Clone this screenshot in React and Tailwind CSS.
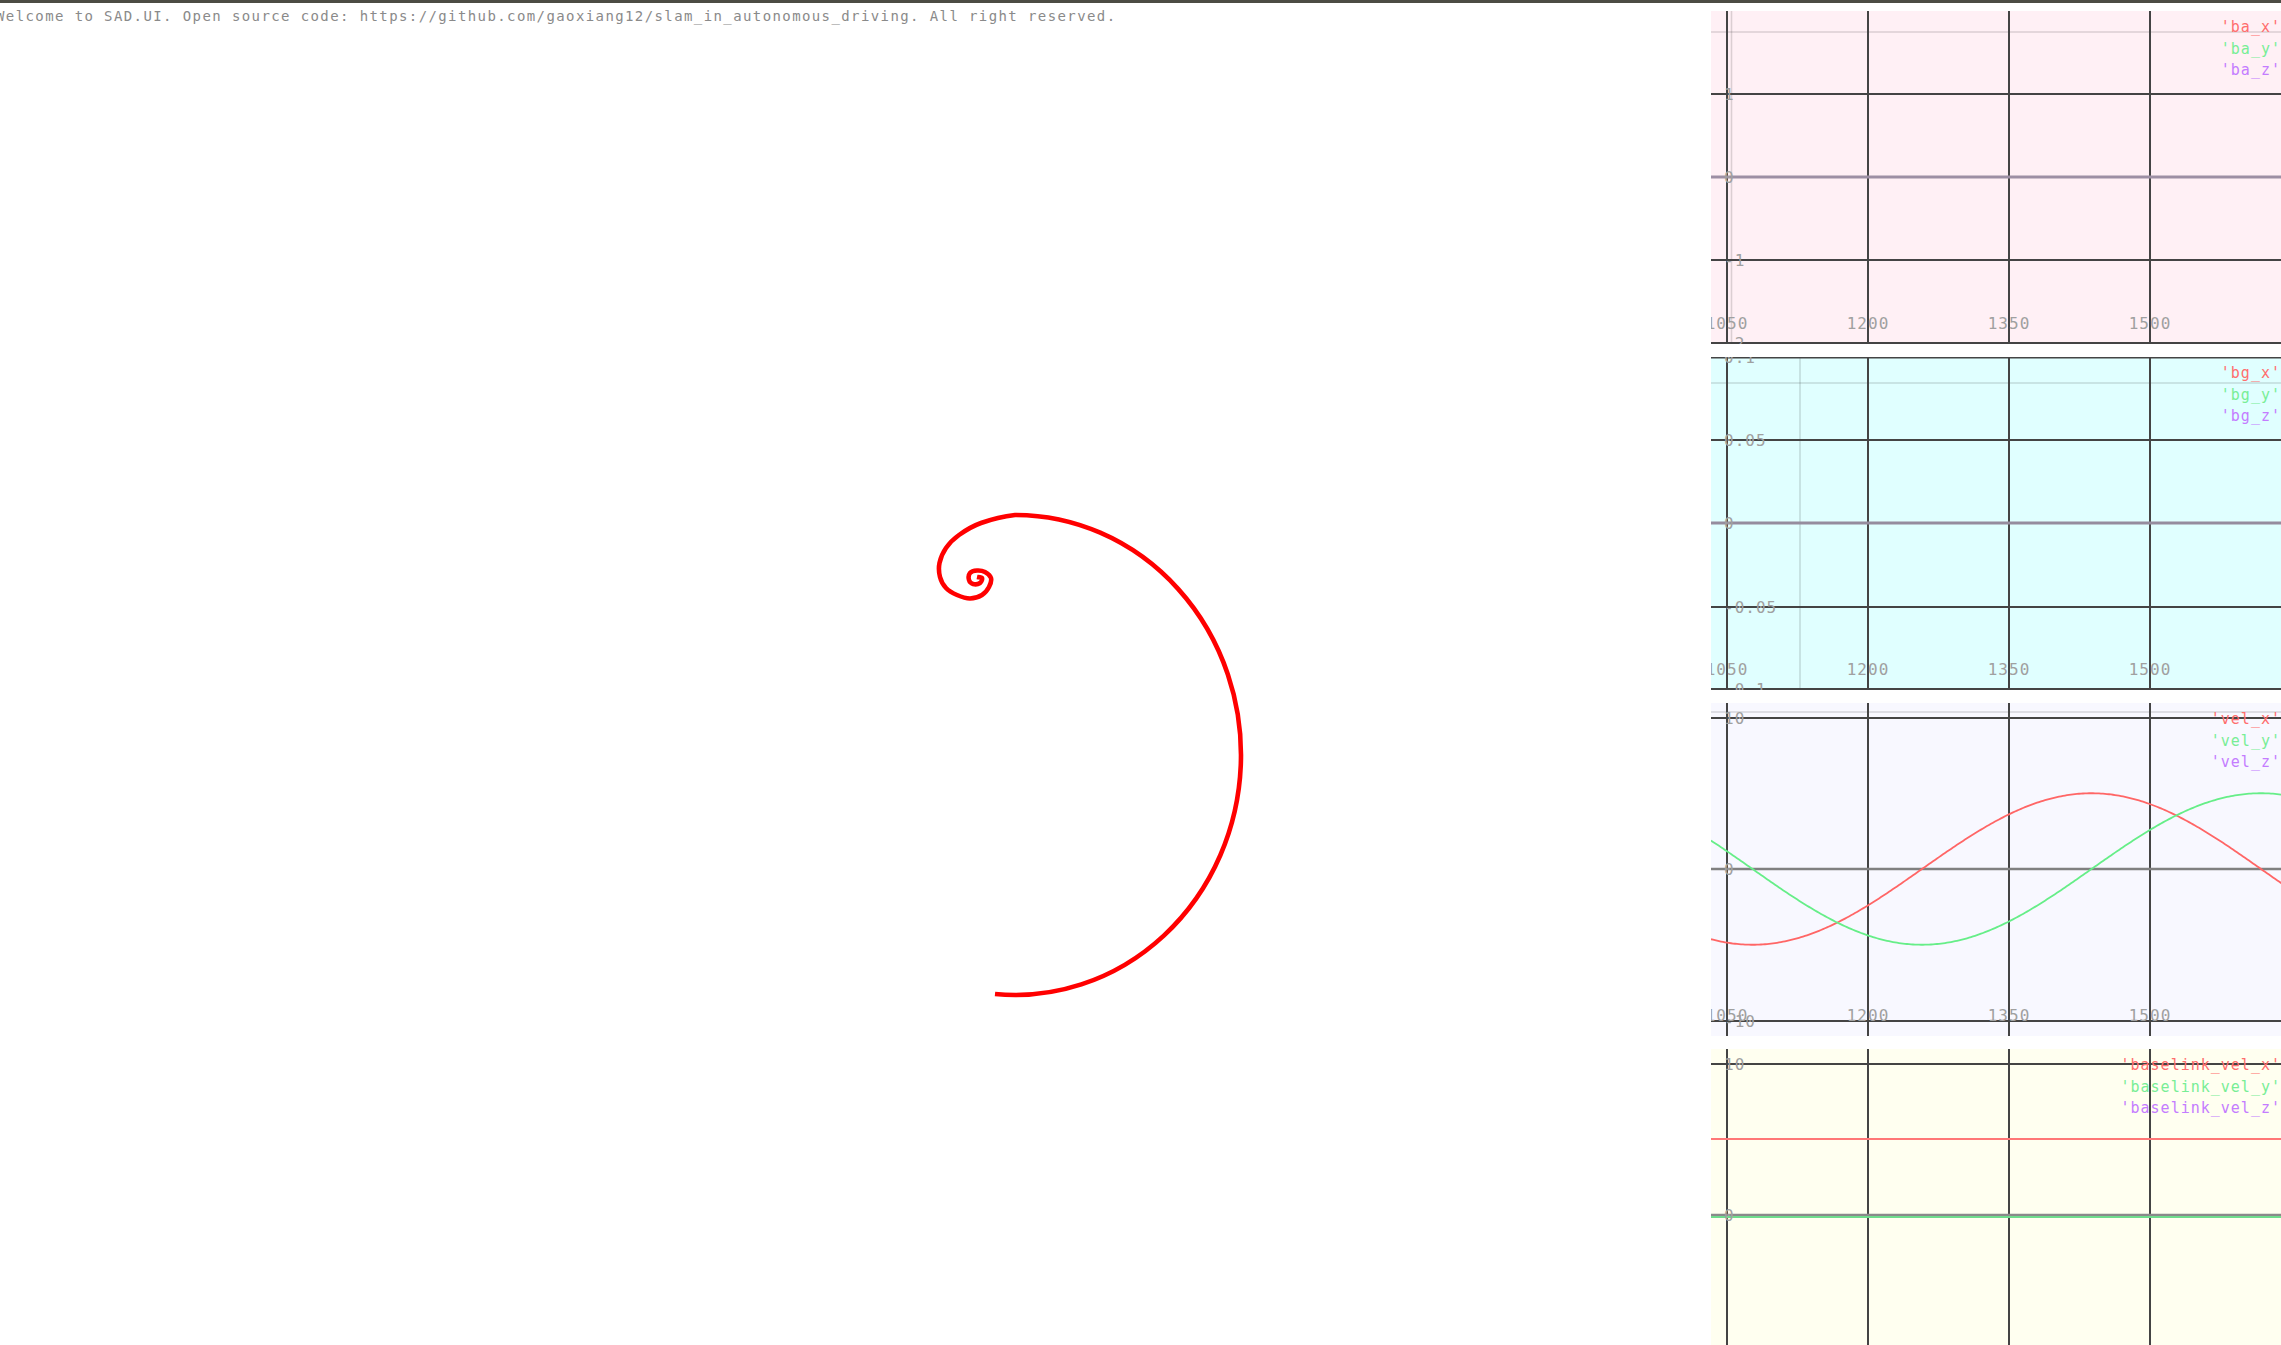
import React from "react";

const MONO = '"DejaVu Sans Mono", "Liberation Mono", monospace';

// inner curl, in travel order (from the start of the trajectory outwards)
const CURL = [
  [977, 577], [982, 578], [980, 583], [973, 584], [969, 580], [970, 573],
  [977, 570.5], [985, 572], [991, 578], [989, 587], [982, 595], [970, 598.5],
  [957, 595], [946, 588], [940, 577], [939.5, 563], [946, 548], [959, 535],
  [981, 523], [1015, 515],
];
const TANGENT_TAIL = [1045, 515.6];

function curlPath(pts, tail) {
  const all = [...pts, tail];
  let d = `M${pts[0][0]} ${pts[0][1]}`;
  for (let i = 0; i < pts.length - 1; i++) {
    const p0 = all[Math.max(0, i - 1)];
    const p1 = all[i];
    const p2 = all[i + 1];
    const p3 = all[i + 2];
    const c1x = p1[0] + (p2[0] - p0[0]) / 6;
    const c1y = p1[1] + (p2[1] - p0[1]) / 6;
    const c2x = p2[0] - (p3[0] - p1[0]) / 6;
    const c2y = p2[1] - (p3[1] - p1[1]) / 6;
    d += ` C${c1x.toFixed(2)} ${c1y.toFixed(2)} ${c2x.toFixed(2)} ${c2y.toFixed(2)} ${p2[0]} ${p2[1]}`;
  }
  return d;
}

// big outer arc: ellipse centre (1015, 755), radii 226 x 240, ending near the bottom
const SPIRAL_D = curlPath(CURL, TANGENT_TAIL) + " A226 240 0 1 1 995 994.06";

function wave(fn) {
  let d = "";
  for (let x = 0; x <= 572; x += 2) {
    const X = x + 1711;
    const th = (2 * Math.PI * (X - 1922)) / 678;
    const y = 166 - fn(th) * 15.15;
    d += (x ? " L" : "M") + x + " " + y.toFixed(2);
  }
  return d;
}

const RED_WAVE = wave((t) => 5 * Math.sin(t));
const GREEN_WAVE = wave((t) => -5 * Math.cos(t));

const VX = [16, 157, 298, 439];
const XL = ["1050", "1200", "1350", "1500"];

const RED = "#ff6e6e";
const GREEN = "#78ee96";
const PURPLE = "#c47cff";

function Panel({ bg, grid, zero, zeroColor, zeroWidth = 3, lightH, lightV, yLabels, xLabels = true, legend, children }) {
  return (
    <div className={`relative h-[333px] shrink-0 overflow-hidden ${bg}`}>
      <svg className="absolute inset-0" width="570" height="333" viewBox="0 0 570 333">
        {lightH !== undefined && (
          <line x1="0" x2="570" y1={lightH} y2={lightH} stroke="rgba(0,0,0,0.14)" strokeWidth="1.6" />
        )}
        {lightV !== undefined && (
          <line x1={lightV} x2={lightV} y1="0" y2="333" stroke="rgba(0,0,0,0.14)" strokeWidth="1.6" />
        )}
        {VX.map((x) => (
          <line key={x} x1={x} x2={x} y1="0" y2="333" stroke="#444" strokeWidth="2" />
        ))}
        {grid.map((y) => (
          <line key={y} x1="0" x2="570" y1={y} y2={y} stroke="#444" strokeWidth="2" />
        ))}
        <line x1="0" x2="570" y1={zero} y2={zero} stroke={zeroColor} strokeWidth={zeroWidth} />
        {children}
        <g fill="#a0a0a0" fontFamily={MONO} fontSize="16" letterSpacing="1">
          {yLabels.map(([y, t]) => (
            <text key={t + y} x="13" y={y} dominantBaseline="central">
              {t}
            </text>
          ))}
          {xLabels &&
            VX.map((x, i) => (
              <text key={x} x={x} y="312" textAnchor="middle" dominantBaseline="central">
                {XL[i]}
              </text>
            ))}
        </g>
      </svg>
      <div
        className="absolute top-[6px] right-0 text-right text-[15px] leading-[21.5px] tracking-[1px] whitespace-pre"
        style={{ fontFamily: MONO }}
      >
        {legend.map(([t, c]) => (
          <div key={t} style={{ color: c }}>
            {`'${t}'`}
          </div>
        ))}
      </div>
    </div>
  );
}

export default function App() {
  return (
    <div className="w-[2281px] h-[1345px] overflow-hidden bg-white flex flex-col" style={{ fontFamily: MONO }}>
      <div className="h-[3px] shrink-0 bg-[#4c4c44]" />
      <div className="flex flex-1 min-h-0">
        <div className="relative flex-1 min-w-0">
          <svg className="absolute inset-0" width="1711" height="1342" viewBox="0 3 1711 1342">
            <path d={SPIRAL_D} fill="none" stroke="#ff0000" strokeWidth="4.6" strokeLinejoin="round" />
          </svg>
          <p
            className="relative -ml-[4px] pt-[3px] text-[14px] leading-[20px] tracking-[1.4px] text-[#8a8a8a] whitespace-nowrap"
            style={{ fontFamily: MONO }}
          >
            Welcome to SAD.UI. Open source code: https://github.com/gaoxiang12/slam_in_autonomous_driving. All right reserved.
          </p>
        </div>
        <div className="w-[570px] shrink-0 flex flex-col gap-[13px] pt-[8px] overflow-hidden">
          <Panel
            bg="bg-[#fff0f5]"
            grid={[83, 249, 332]}
            zero={166}
            zeroColor="#9d8fa4"
            lightH={21}
            lightV={20.5}
            yLabels={[[83, "1"], [166, "0"], [249, "-1"], [332, "-2"]]}
            legend={[["ba_x", RED], ["ba_y", GREEN], ["ba_z", PURPLE]]}
          />
          <Panel
            bg="bg-[#e0ffff]"
            grid={[0.5, 83, 250, 332]}
            zero={166}
            zeroColor="#958c9e"
            lightH={26}
            lightV={89}
            yLabels={[[0, "0.1"], [83, "0.05"], [166, "0"], [250, "-0.05"], [332, "-0.1"]]}
            legend={[["bg_x", RED], ["bg_y", GREEN], ["bg_z", PURPLE]]}
          />
          <Panel
            bg="bg-[#f8f8ff]"
            grid={[15, 318]}
            zero={166}
            zeroColor="#808080"
            zeroWidth={2.5}
            lightH={9}
            yLabels={[[15, "10"], [166, "0"], [318, "-10"]]}
            legend={[["vel_x", RED], ["vel_y", GREEN], ["vel_z", PURPLE]]}
          >
            <path d={RED_WAVE} fill="none" stroke="#ff6666" strokeWidth="1.8" />
            <path d={GREEN_WAVE} fill="none" stroke="#66ee88" strokeWidth="1.8" />
          </Panel>
          <Panel
            bg="bg-[#fffff0]"
            grid={[15]}
            zero={166}
            zeroColor="#8a8a8a"
            zeroWidth={2.5}
            yLabels={[[15, "10"], [166, "0"]]}
            xLabels={false}
            legend={[["baselink_vel_x", RED], ["baselink_vel_y", GREEN], ["baselink_vel_z", PURPLE]]}
          >
            <line x1="0" x2="570" y1="90" y2="90" stroke="#ff7777" strokeWidth="2" />
            <line x1="0" x2="570" y1="168" y2="168" stroke="#6fdc8c" strokeWidth="1.8" />
          </Panel>
        </div>
      </div>
    </div>
  );
}
